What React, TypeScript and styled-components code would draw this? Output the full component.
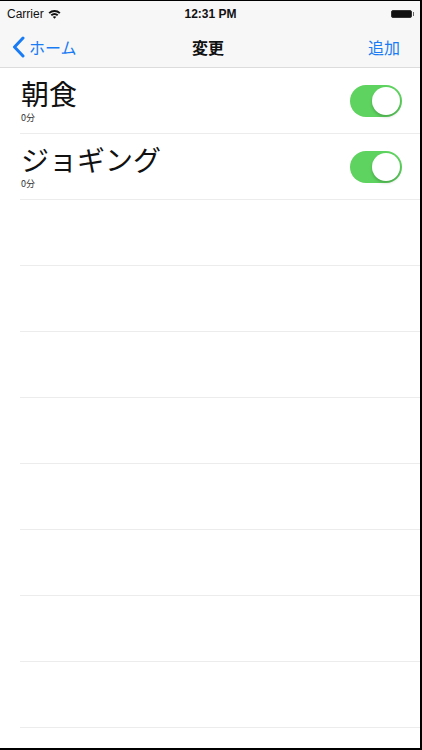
import React from 'react';
import styled, { createGlobalStyle } from 'styled-components';

const GlobalStyle = createGlobalStyle`
  html, body {
    margin: 0;
    padding: 0;
    background: #000;
  }
  body {
    font-family: "Liberation Sans", "Noto Sans CJK JP", sans-serif;
  }
`;

const Screen = styled.div`
  width: 420px;
  height: 747px;
  margin-top: 1px;
  background: #fff;
  overflow: hidden;
  display: flex;
  flex-direction: column;
`;

const Header = styled.div`
  background: #f7f7f7;
  border-bottom: 1px solid #dcdcdc;
`;

const StatusBar = styled.div`
  height: 26px;
  display: grid;
  grid-template-columns: 1fr auto 1fr;
  align-items: center;
  padding: 0 6px 0 7px;
  font-size: 12px;
  color: #111;
`;

const Carrier = styled.div`
  display: flex;
  align-items: center;
  gap: 4px;
`;

const Clock = styled.div`
  font-weight: bold;
`;

const Battery = styled.div`
  justify-self: end;
  display: flex;
  align-items: center;
  gap: 1px;
`;

const BatteryBody = styled.div`
  width: 21px;
  height: 8px;
  border-radius: 2px;
  background: #111;
  border: 1px solid #333;
  box-sizing: border-box;
`;

const BatteryCap = styled.div`
  width: 1.5px;
  height: 4px;
  background: #666;
`;

const NavBar = styled.div`
  height: 40px;
  display: grid;
  grid-template-columns: 1fr auto 1fr;
  align-items: center;
  padding: 0 20px 0 12px;
`;

const BackButton = styled.div`
  display: flex;
  align-items: center;
  gap: 4px;
  color: #1a7cf4;
  font-size: 16px;
  font-family: "Noto Sans CJK JP", sans-serif;
`;

const NavTitle = styled.div`
  font-size: 16px;
  font-weight: bold;
  color: #111;
  margin-left: 4px;
  font-family: "Noto Sans CJK JP", sans-serif;
`;

const NavAction = styled.div`
  justify-self: end;
  color: #1a7cf4;
  font-size: 16px;
  font-family: "Noto Sans CJK JP", sans-serif;
`;

const List = styled.div`
  display: flex;
  flex-direction: column;
`;

const Row = styled.div`
  height: 66px;
  margin-left: 20px;
  padding-left: 1px;
  padding-right: 18px;
  box-sizing: border-box;
  border-bottom: 1px solid #ececec;
  display: flex;
  align-items: center;
  justify-content: space-between;
`;

const Texts = styled.div`
  display: flex;
  flex-direction: column;
`;

const Title = styled.div`
  font-size: 28px;
  line-height: 30px;
  color: #111;
  font-family: "Noto Sans CJK JP", sans-serif;
`;

const Sub = styled.div`
  font-size: 9px;
  line-height: 11px;
  margin-top: 4px;
  color: #333;
  font-family: "Noto Sans CJK JP", sans-serif;
`;

const Switch = styled.div<{ $on: boolean }>`
  width: 52px;
  height: 32px;
  border-radius: 16px;
  background: ${p => (p.$on ? '#5ed35f' : '#e5e5e5')};
  display: flex;
  align-items: center;
  justify-content: ${p => (p.$on ? 'flex-end' : 'flex-start')};
  padding: 2px;
  box-sizing: border-box;
`;

const Knob = styled.div`
  width: 28px;
  height: 28px;
  border-radius: 50%;
  background: #fff;
  box-shadow: 0 2px 3px rgba(0, 0, 0, 0.2);
`;

const items = [
  { title: '朝食', sub: '0分' },
  { title: 'ジョギング', sub: '0分' },
];

const Wifi = () => (
  <svg width="13" height="10" viewBox="0 0 13 10">
    <path d="M0.5 3.4 A9 9 0 0 1 12.5 3.4 L11.2 4.8 A7 7 0 0 0 1.8 4.8 Z" fill="#111" />
    <path d="M2.6 5.6 A6 6 0 0 1 10.4 5.6 L9.1 7 A4 4 0 0 0 3.9 7 Z" fill="#111" />
    <path d="M4.7 7.8 A3 3 0 0 1 8.3 7.8 L6.5 9.8 Z" fill="#111" />
  </svg>
);

const Chevron = () => (
  <svg width="13" height="22" viewBox="0 0 13 22">
    <path d="M11 2 L2.5 11 L11 20" fill="none" stroke="#1a7cf4" strokeWidth="3" strokeLinecap="round" strokeLinejoin="round" />
  </svg>
);

const App = () => (
  <>
    <GlobalStyle />
    <Screen>
      <Header>
        <StatusBar>
          <Carrier>
            Carrier <Wifi />
          </Carrier>
          <Clock>12:31 PM</Clock>
          <Battery>
            <BatteryBody />
            <BatteryCap />
          </Battery>
        </StatusBar>
        <NavBar>
          <BackButton>
            <Chevron />
            ホーム
          </BackButton>
          <NavTitle>変更</NavTitle>
          <NavAction>追加</NavAction>
        </NavBar>
      </Header>
      <List>
        {items.map(item => (
          <Row key={item.title}>
            <Texts>
              <Title>{item.title}</Title>
              <Sub>{item.sub}</Sub>
            </Texts>
            <Switch $on>
              <Knob />
            </Switch>
          </Row>
        ))}
        {Array.from({ length: 8 }).map((_, i) => (
          <Row key={i} />
        ))}
      </List>
    </Screen>
  </>
);

export default App;
